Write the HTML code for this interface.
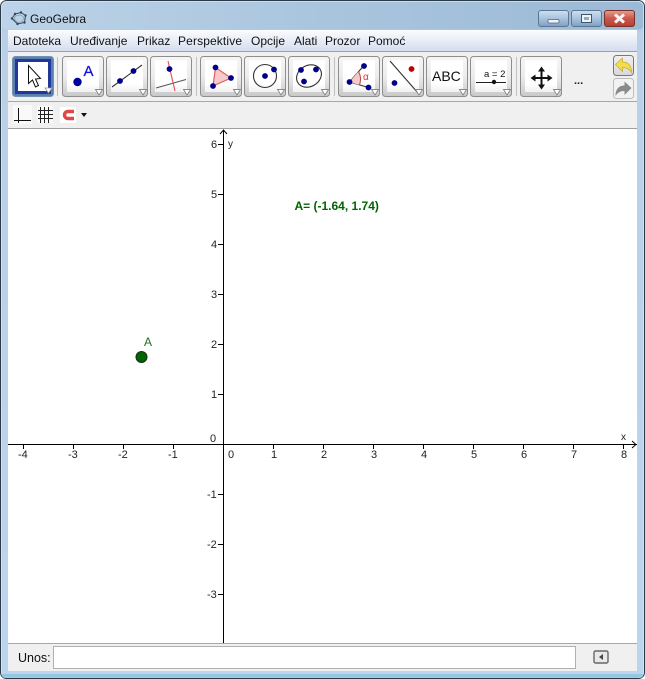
<!DOCTYPE html>
<html><head><meta charset="utf-8">
<style>
html,body{margin:0;padding:0;background:#fff;width:645px;height:679px;overflow:hidden}
svg{display:block;font-family:"Liberation Sans",sans-serif}
</style></head>
<body>
<svg width="645" height="679" viewBox="0 0 645 679" xmlns="http://www.w3.org/2000/svg">
<defs>
<linearGradient id="frame" x1="0" y1="0" x2="0" y2="1">
<stop offset="0" stop-color="#9db9d3"/><stop offset=".05" stop-color="#b9d0e6"/><stop offset="1" stop-color="#bcd5ee"/>
</linearGradient>
<linearGradient id="title" x1="0" y1="0" x2="1" y2="0">
<stop offset="0" stop-color="#bcd3e8"/><stop offset=".5" stop-color="#a9c5de"/><stop offset="1" stop-color="#9cb9d5"/>
</linearGradient>
<linearGradient id="menu" x1="0" y1="0" x2="0" y2="1">
<stop offset="0" stop-color="#fbfcfe"/><stop offset="1" stop-color="#d5deef"/>
</linearGradient>
<linearGradient id="btn" x1="0" y1="0" x2="0" y2="1">
<stop offset="0" stop-color="#f6f6f6"/><stop offset=".5" stop-color="#ececec"/><stop offset="1" stop-color="#c8c8c8"/>
</linearGradient>
<linearGradient id="inner" x1="0" y1="0" x2="0" y2="1">
<stop offset="0" stop-color="#ffffff"/><stop offset=".75" stop-color="#ffffff"/><stop offset="1" stop-color="#f0f0f0"/>
</linearGradient>
<linearGradient id="wb" x1="0" y1="0" x2="0" y2="1">
<stop offset="0" stop-color="#cfdff0"/><stop offset=".5" stop-color="#a8c3de"/><stop offset="1" stop-color="#7f9fc0"/>
</linearGradient>
<linearGradient id="wr" x1="0" y1="0" x2="0" y2="1">
<stop offset="0" stop-color="#e2a094"/><stop offset=".5" stop-color="#c9584a"/><stop offset="1" stop-color="#b23f33"/>
</linearGradient>
<linearGradient id="undo" x1="0" y1="0" x2="0" y2="1">
<stop offset="0" stop-color="#f0f0f0"/><stop offset="1" stop-color="#d8d8d8"/>
</linearGradient>
</defs>

<!-- window frame -->
<rect x="0.5" y="0.5" width="644" height="678" rx="6" fill="url(#frame)" stroke="#2b3a47"/>
<rect x="1.5" y="1.5" width="642" height="28" rx="5" fill="url(#title)"/>
<rect x="1.5" y="1.5" width="642" height="676" rx="5" fill="none" stroke="#dcebf7" stroke-opacity=".7"/>
<rect x="2" y="674" width="641" height="4" fill="#6fb6cf" opacity=".5"/>

<!-- title -->
<path d="M15 14l6-1.500 4.500 3-1 7-7 1.500-5.500-5.500z" fill="none" stroke="#33475a" stroke-width="1"/>
<path d="M15.500 16l5-1 3 2-.8 4.500-5 1-3.500-3.500z" fill="none" stroke="#7d92a6" stroke-width=".6"/>
<g fill="#33475a"><circle cx="15" cy="14" r="1.200"/><circle cx="21" cy="12.500" r="1.200"/><circle cx="25.500" cy="15.500" r="1.200"/><circle cx="24.500" cy="22.500" r="1.200"/><circle cx="17.500" cy="24" r="1.200"/><circle cx="12" cy="18.500" r="1.200"/></g>
<text x="30" y="23" font-size="12" fill="#111">GeoGebra</text>

<!-- window buttons -->
<rect x="538.500" y="10.500" width="30" height="16" rx="2.500" fill="url(#wb)" stroke="#5b7793"/>
<rect x="548" y="19.500" width="11" height="3.500" rx="1" fill="#eef3f8" stroke="#4c6680" stroke-width=".8"/>
<rect x="571.500" y="10.500" width="30" height="16" rx="2.500" fill="url(#wb)" stroke="#5b7793"/>
<rect x="581.500" y="14.500" width="10" height="8" fill="#eef3f8" stroke="#3e566e" stroke-width="1"/>
<rect x="584" y="17" width="5" height="3" fill="#8fabc6"/>
<rect x="604.500" y="10.500" width="30" height="16" rx="2.500" fill="url(#wr)" stroke="#7b2f27"/>
<path d="M615 14.500l9 8M624 14.500l-9 8" stroke="#f4f4f4" stroke-width="3"/>

<!-- menu -->
<rect x="8" y="30" width="629" height="21" fill="url(#menu)"/>
<rect x="8" y="51" width="629" height="1" fill="#a0a0a0"/>
<g font-size="12" fill="#111">
<text x="13" y="45">Datoteka</text>
<text x="70" y="45">Uređivanje</text>
<text x="137" y="45">Prikaz</text>
<text x="178" y="45" textLength="64">Perspektive</text>
<text x="251" y="45">Opcije</text>
<text x="294" y="45">Alati</text>
<text x="325" y="45">Prozor</text>
<text x="368" y="45">Pomoć</text>
</g>

<!-- toolbar -->
<rect x="8" y="52" width="629" height="49" fill="#f0f0f0"/>
<rect x="8" y="101" width="629" height="1" fill="#a8a8a8"/>
<rect x="8" y="102" width="629" height="26" fill="#f0f0f0"/>
<rect x="8" y="128" width="629" height="1" fill="#a0a0a0"/>

<g fill="#c0c0c0">
<rect x="57" y="57" width="1" height="39"/><rect x="196" y="57" width="1" height="39"/>
<rect x="334" y="57" width="1" height="39"/><rect x="516" y="57" width="1" height="39"/>
</g>

<!-- selected button -->
<rect x="12.500" y="56.500" width="41" height="40" rx="3" fill="#5d7fb0" stroke="#6f93b8"/>
<rect x="15" y="59" width="36" height="35" fill="#20389a"/>
<rect x="18" y="62" width="30" height="29" fill="#fff"/>
<path d="M28.500 65.500v18l4-3.500 3 7 3-1.500-3-6.500 5-.5z" fill="#fff" stroke="#111" stroke-width="1"/>
<path d="M45 88h7l-3.500 5z" fill="#fff" stroke="#999" stroke-width=".8"/>

<!-- buttons -->
<g fill="url(#btn)" stroke="#8d8d8d">
<rect x="62.500" y="56.500" width="41" height="40" rx="3"/>
<rect x="106.500" y="56.500" width="41" height="40" rx="3"/>
<rect x="150.500" y="56.500" width="41" height="40" rx="3"/>
<rect x="200.500" y="56.500" width="41" height="40" rx="3"/>
<rect x="244.500" y="56.500" width="41" height="40" rx="3"/>
<rect x="288.500" y="56.500" width="41" height="40" rx="3"/>
<rect x="338.500" y="56.500" width="41" height="40" rx="3"/>
<rect x="382.500" y="56.500" width="41" height="40" rx="3"/>
<rect x="426.500" y="56.500" width="41" height="40" rx="3"/>
<rect x="470.500" y="56.500" width="41" height="40" rx="3"/>
<rect x="520.500" y="56.500" width="41" height="40" rx="3"/>
</g>
<g fill="url(#inner)">
<rect x="67" y="60" width="32" height="32"/><rect x="111" y="60" width="32" height="32"/>
<rect x="155" y="60" width="32" height="32"/><rect x="205" y="60" width="32" height="32"/>
<rect x="249" y="60" width="32" height="32"/><rect x="293" y="60" width="32" height="32"/>
<rect x="343" y="60" width="32" height="32"/><rect x="387" y="60" width="32" height="32"/>
<rect x="431" y="60" width="32" height="32"/><rect x="475" y="60" width="32" height="32"/>
<rect x="525" y="60" width="32" height="32"/>
</g>

<!-- icon: point -->
<circle cx="77.500" cy="82" r="4.200" fill="#0000a0"/>
<text x="83.500" y="76" font-size="15" fill="#1414e0" stroke="#1414e0" stroke-width=".3">A</text>
<!-- icon: line -->
<path d="M112 87l30-22" stroke="#333" stroke-width="1.100"/>
<circle cx="120" cy="81" r="2.900" fill="#00008b"/><circle cx="133.500" cy="71" r="2.900" fill="#00008b"/>
<!-- icon: perpendicular -->
<path d="M156 88l30-8.500" stroke="#555" stroke-width="1.100"/>
<path d="M168 61l7 30" stroke="#e05050" stroke-width="1.100"/>
<circle cx="169.500" cy="69" r="2.900" fill="#00008b"/>
<!-- icon: polygon -->
<path d="M215.500 67.500l-2.500 18.500 18-8z" fill="#f6caca" stroke="#e06060" stroke-width="1.200"/>
<circle cx="215.500" cy="67.500" r="2.900" fill="#00008b"/><circle cx="213" cy="86" r="2.900" fill="#00008b"/><circle cx="231" cy="78" r="2.900" fill="#00008b"/>
<!-- icon: circle -->
<circle cx="265" cy="76" r="11.500" fill="none" stroke="#333" stroke-width="1.100"/>
<circle cx="265" cy="76" r="2.900" fill="#00008b"/><circle cx="274" cy="69.500" r="2.900" fill="#00008b"/>
<!-- icon: conic -->
<ellipse cx="309" cy="76" rx="13" ry="10.500" fill="none" stroke="#333" stroke-width="1.100" transform="rotate(-30 309 76)"/>
<circle cx="301" cy="70" r="2.900" fill="#00008b"/><circle cx="316" cy="69.500" r="2.900" fill="#00008b"/><circle cx="304" cy="81.500" r="2.900" fill="#00008b"/>
<!-- icon: angle -->
<path d="M349.500 82l14-16M349.500 82l19 5.500" stroke="#333" stroke-width="1.100" fill="none"/>
<path d="M349.500 82l9-10.500q3.500 6 1 13.500z" fill="#f6caca"/>
<path d="M358.500 71.500q3.500 6 1 13.500" stroke="#c04040" fill="none"/>
<text x="363" y="80" font-size="10" fill="#e03030">α</text>
<circle cx="349.500" cy="82" r="2.900" fill="#00008b"/><circle cx="364" cy="66" r="2.900" fill="#00008b"/><circle cx="368.500" cy="87.500" r="2.900" fill="#00008b"/>
<!-- icon: reflect / line -->
<path d="M390 61l28 32" stroke="#333" stroke-width="1.100"/>
<circle cx="394.500" cy="83" r="2.900" fill="#00008b"/><circle cx="411.500" cy="69" r="2.900" fill="#c00000"/>
<!-- icon: ABC -->
<text x="432" y="81" font-size="14" fill="#111">ABC</text>
<!-- icon: slider -->
<text x="484" y="77" font-size="9.500" fill="#111">a = 2</text>
<path d="M476 82.500h30" stroke="#222" stroke-width="1"/>
<circle cx="494" cy="82" r="2.200" fill="#111"/>
<!-- icon: move -->
<path d="M541.500 69v18M533 78h18" stroke="#111" stroke-width="2"/>
<path d="M541.500 66.500l-3.500 5h7zM541.500 89.500l-3.500-5h7zM530.500 78l5-3.500v7zM552.500 78l-5-3.500v7z" fill="#111"/>
<!-- triangles -->
<g fill="#fff" stroke="#888" stroke-width=".9">
<path d="M95.500 89.500h7l-3.500 5.500z"/><path d="M139.500 89.500h7l-3.500 5.500z"/><path d="M183.500 89.500h7l-3.500 5.500z"/>
<path d="M233.500 89.500h7l-3.500 5.500z"/><path d="M277.500 89.500h7l-3.500 5.500z"/><path d="M321.500 89.500h7l-3.500 5.500z"/>
<path d="M371.500 89.500h7l-3.500 5.500z"/><path d="M415.500 89.500h7l-3.500 5.500z"/><path d="M459.500 89.500h7l-3.500 5.500z"/>
<path d="M503.500 89.500h7l-3.500 5.500z"/><path d="M553.500 89.500h7l-3.500 5.500z"/>
</g>
<text x="574" y="84" font-size="11" font-weight="bold" fill="#222">...</text>

<!-- undo / redo -->
<rect x="613.500" y="55.500" width="20" height="20" rx="3" fill="url(#undo)" stroke="#777"/>
<path d="M615.500 64.500l7-6.500v4c5 0 9 3 9 10.500-2-3.500-5-5-9-5v4z" fill="#f5dc4c" stroke="#c8a820" stroke-width=".7"/>
<rect x="613.500" y="78.500" width="20" height="20" rx="3" fill="#f2f2f2" stroke="#bdbdbd"/>
<path d="M631.500 88l-7-6.500v4c-5 0-9 3-9 10.500 2-3.500 5-5 9-5v4z" fill="#8a8a8a"/>

<!-- secondary toolbar -->
<rect x="13" y="105" width="19" height="19" fill="#fff" opacity=".6"/>
<path d="M18.500 108v15M14 120.500h17" stroke="#111" stroke-width="1" fill="none"/>
<rect x="37" y="106" width="16" height="17" fill="#fff" opacity=".6"/>
<path d="M40.500 107v16M44.500 107v16M48.500 107v16M38 110.500h15M38 114.500h15M38 118.500h15" stroke="#222" stroke-width="1"/>
<rect x="60" y="107" width="16" height="16" fill="#fff"/>
<path d="M74 111.500h-6a3.500 3.500 0 0 0 0 7h6" fill="none" stroke="#e04848" stroke-width="3.500"/>
<path d="M81 113h6l-3 4z" fill="#111"/>

<!-- canvas -->
<rect x="8" y="129" width="629" height="514" fill="#fff"/>
<path d="M223.500 130v513" stroke="#000" stroke-width="1"/>
<path d="M8 444.500h629" stroke="#000" stroke-width="1"/>
<path d="M220 134l3.500-4 3.500 4M632 441l4 3.500-4 3.500" fill="none" stroke="#000" stroke-width="1"/>
<path d="M23.500 444v5M73.500 444v5M123.500 444v5M173.500 444v5M273.500 444v5M323.500 444v5M373.500 444v5M423.500 444v5M473.500 444v5M523.500 444v5M573.500 444v5M623.500 444v5" stroke="#000" stroke-width="1"/>
<path d="M218 144.500h5M218 194.500h5M218 244.500h5M218 294.500h5M218 344.500h5M218 394.500h5M218 494.500h5M218 544.500h5M218 594.500h5" stroke="#000" stroke-width="1"/>
<g font-size="11" fill="#222">
<text x="18" y="458">-4</text><text x="68" y="458">-3</text><text x="118" y="458">-2</text><text x="168" y="458">-1</text>
<text x="228" y="458">0</text><text x="271" y="458">1</text><text x="321" y="458">2</text><text x="371" y="458">3</text>
<text x="421" y="458">4</text><text x="471" y="458">5</text><text x="521" y="458">6</text><text x="571" y="458">7</text><text x="621" y="458">8</text>
<text x="211" y="148">6</text><text x="211" y="198">5</text><text x="211" y="248">4</text><text x="211" y="298">3</text>
<text x="211" y="348">2</text><text x="211" y="398">1</text><text x="210" y="442">0</text>
<text x="207" y="498">-1</text><text x="207" y="548">-2</text><text x="207" y="598">-3</text>
<text x="228" y="147" font-size="10">y</text><text x="621" y="440" font-size="10">x</text>
</g>
<circle cx="141.500" cy="357" r="5.500" fill="#006400" stroke="#1a2e1a" stroke-width="1"/>
<text x="144" y="346" font-size="12" fill="#1e6e1e">A</text>
<text x="294.500" y="210" font-size="12" font-weight="bold" fill="#006400">A= (-1.64, 1.74)</text>

<!-- input bar -->
<rect x="8" y="643" width="629" height="1" fill="#a8a8a8"/>
<rect x="8" y="644" width="629" height="27" fill="#f0f0f0"/>
<text x="18" y="662" font-size="12.500" fill="#111">Unos:</text>
<rect x="53.500" y="646.500" width="522" height="22" fill="#fff" stroke="#b0b0b0"/>
<rect x="594" y="651" width="14" height="12" rx="1.500" fill="#e8e8e8" stroke="#666" stroke-width="1.400"/>
<path d="M603 654v6l-4-3z" fill="#444"/>
</svg>
</body></html>
